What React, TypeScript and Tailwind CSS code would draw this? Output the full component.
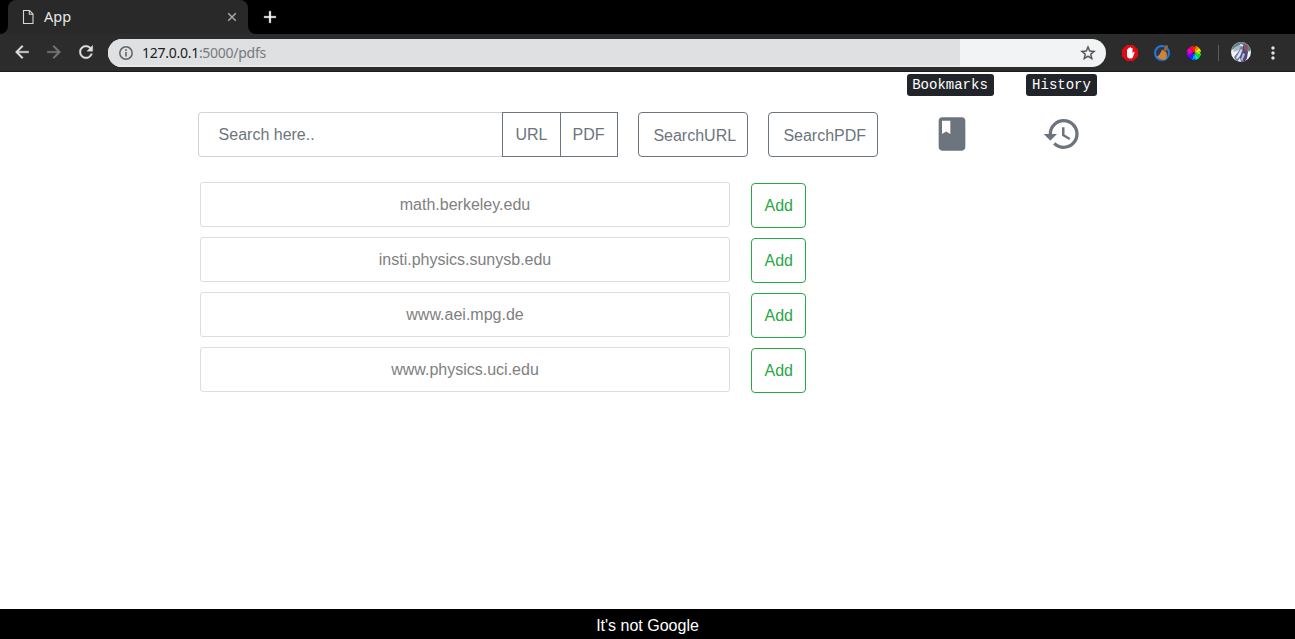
import React from "react";
import { MdBook, MdHistory, MdMoreVert } from "react-icons/md";

const sites = ["math.berkeley.edu", "insti.physics.sunysb.edu", "www.aei.mpg.de", "www.physics.uci.edu"];

const wheel = ["#ff8a00", "#ffe600", "#7dff00", "#00e03c", "#00e5c8", "#00a2ff", "#1b2cff", "#7a00ff", "#d400ff", "#ff00b4", "#ff0046", "#ff2a00"];

const glyphs = {
  back: "M20 11H7.83l5.59-5.59L12 4l-8 8 8 8 1.41-1.41L7.83 13H20v-2z",
  forward: "M12 4l-1.41 1.41L16.17 11H4v2h12.17l-5.58 5.59L12 20l8-8z",
  refresh: "M17.65 6.35A7.958 7.958 0 0 0 12 4c-4.42 0-7.99 3.58-7.99 8s3.57 8 7.99 8c3.73 0 6.84-2.55 7.73-6h-2.08A5.99 5.99 0 0 1 12 18c-3.31 0-6-2.69-6-6s2.69-6 6-6c1.66 0 3.14.69 4.22 1.78L13 11h7V4l-2.35 2.35z",
  plus: "M19 13h-6v6h-2v-6H5v-2h6V5h2v6h6v2z",
  star: "M22 9.24l-7.19-.62L12 2 9.19 8.63 2 9.24l5.46 4.73L5.82 21 12 17.27 18.18 21l-1.63-7.03L22 9.24zM12 15.4l-3.76 2.27 1-4.28-3.32-2.88 4.38-.38L12 6.1l1.71 4.04 4.38.38-3.32 2.88 1 4.28L12 15.4z",
};

function Glyph({ name, className }: { name: keyof typeof glyphs; className: string }) {
  return (
    <svg viewBox="0 0 24 24" fill="currentColor" stroke="currentColor" strokeWidth="0.4" className={className}>
      <path d={glyphs[name]} />
    </svg>
  );
}

function TabStrip() {
  return (
    <div className="flex h-[34px] items-end bg-black">
      <svg width="8" height="8" viewBox="0 0 8 8" className="shrink-0">
        <path d="M8 0v8H0a8 8 0 0 0 8-8z" fill="#292929" />
      </svg>
      <div className="flex h-[34px] w-60 items-center rounded-t-lg bg-[#292929] pl-[14px] pr-[11px]">
        <svg width="12" height="16" viewBox="0 0 12 16" fill="none" stroke="#d6d6d6" strokeWidth="1.1">
          <path d="M1.5 1.5h6l3.5 3.5v9.5H1.5zM7.3 1.5V5.2H11" />
        </svg>
        <span className="-mt-0.5 ml-[10px] text-[14.5px] leading-5 text-[#e8e8e8]">App</span>
        <svg width="10" height="10" viewBox="0 0 10 10" fill="none" stroke="#a8a8a8" strokeWidth="1.5" className="ml-auto">
          <path d="m1.2 1.2 7.6 7.6M8.8 1.2 1.2 8.8" />
        </svg>
      </div>
      <svg width="8" height="8" viewBox="0 0 8 8" className="shrink-0">
        <path d="M0 0v8h8a8 8 0 0 1-8-8z" fill="#292929" />
      </svg>
      <div className="flex h-[34px] items-center pl-1">
        <Glyph name="plus" className="size-5 text-white" />
      </div>
    </div>
  );
}

function Extensions() {
  return (
    <div className="flex items-center">
      <svg width="16" height="16" viewBox="0 0 16 16" className="ml-4">
        <path d="M4.8 0h6.4L16 4.8v6.4L11.2 16H4.8L0 11.2V4.8z" fill="#e30b13" />
        <path d="M5 9V4.6q.7-.9 1.3 0V3.1q.7-.9 1.4 0v-.6q.7-.9 1.4 0v.8q.7-.8 1.4 0v5.2l1-1.6q.9-.5 1.1.3L11 12q-.7 1.5-2.7 1.5Q5 13.5 5 10z" fill="#fff" />
      </svg>
      <svg width="16" height="16" viewBox="0 0 16 16" className="ml-4">
        <circle cx="8" cy="8" r="7" fill="#303640" stroke="#1f78dc" strokeWidth="2" />
        <path d="M12.3 0 9.5 4.8 12 6.4 14.2 1z" fill="#a9652b" />
        <path d="M8.2 4.6 12.5 7.5c.6 2 .3 5-.8 7.2C8.5 15 4.5 13.9 3 11.5c2.4-.8 3.6-3.6 5.2-6.9z" fill="#cf8437" />
      </svg>
      <svg width="16" height="16" viewBox="0 0 16 16" className="ml-4">
        <circle cx="8" cy="8.7" r="7.2" fill="#181818" />
        {wheel.map((color, i) => (
          <path key={color} d="M8 8V.8a7.2 7.2 0 0 1 3.75 1.05z" fill={color} transform={`rotate(${i * 30 + 15} 8 8)`} />
        ))}
        <path d="M7.3.3h1.4v1.7H7.3zM7.3 14h1.4v1.7H7.3zM.3 7.3h1.7v1.4H.3zM14 7.3h1.7v1.4H14z" fill="#333" />
        <circle cx="8" cy="8" r="0.9" fill="#222" />
      </svg>
      <div className="ml-4 h-4 w-px bg-[#5d5d5d]" />
      <svg width="20" height="20" viewBox="0 0 20 20" className="-mt-0.5 ml-3 rounded-full">
        <rect width="20" height="20" fill="#f1f3f6" />
        <path d="M2 0h15l3 7-2 3-4-6-4-2-4 3-5 3z" fill="#66808a" />
        <path d="m4 5 5-2 2 2-5 4-4 1z" fill="#a5bac2" />
        <path d="M10 4 7 10l-4 5 3 5 6-8 2-7z" fill="#6f7cab" />
        <path d="m12 3 4 2 1 5-1 6-2 4h-4l-1-5 3-6z" fill="#51457a" />
        <path d="m13 2 3 1 1 4-2 3-2-3z" fill="#8d5359" />
        <path d="m10 7 1 1-2 6-3 3-1-1z" fill="#dfe5f4" />
        <path d="m12 11 2 1-2 5-1 3-1-3z" fill="#b9bbdf" />
      </svg>
      <MdMoreVert className="ml-3 size-5 text-[#e0e0e0]" />
    </div>
  );
}

function Toolbar() {
  return (
    <div className="flex h-[38px] items-center border-b border-[#1b1b1b] bg-[#2c2c2c] pl-3">
      <div className="-mt-0.5 flex gap-3 text-[#e0e0e0]">
        <Glyph name="back" className="size-5" />
        <Glyph name="forward" className="size-5 text-[#777]" />
        <Glyph name="refresh" className="size-5" />
      </div>
      <div className="ml-3 flex h-7 w-[998px] items-center overflow-hidden rounded-full bg-[#f1f3f4]">
        <div className="flex h-full w-[852px] items-center border-b-2 border-[#e7e9ea] bg-[#dfe0e2] pl-[10px]">
          <svg width="16" height="16" viewBox="0 0 16 16" className="mt-0.5">
            <circle cx="8" cy="8" r="6.2" fill="none" stroke="#5f6368" strokeWidth="1.5" />
            <path d="M7.2 4.3h1.6v1.6H7.2zM7.2 7h1.6v4.6H7.2z" fill="#5f6368" />
          </svg>
          <span className="ml-2 mt-[3px] text-[14px] leading-5 tracking-[-0.27px] text-[#202124]">
            127.0.0.1<span className="text-[#777a7e]">:5000/pdfs</span>
          </span>
        </div>
        <Glyph name="star" className="ml-auto mr-[9px] size-[18px] text-[#4d5156]" />
      </div>
      <Extensions />
    </div>
  );
}

function SearchBar() {
  return (
    <div className="flex h-[85px] items-start pl-[198px]">
      <div className="mt-10 flex h-[45px] text-[#6c757d]">
        <input
          placeholder="Search here.."
          className="w-[305px] rounded-l border border-r-0 border-[#ced4da] pl-[19.6px] outline-none placeholder:text-[#6c757d]"
        />
        <button className="-ml-px w-[59px] border border-[#6c757d]">URL</button>
        <button className="-ml-px w-[58px] border border-[#6c757d] pr-px">PDF</button>
        <button className="ml-5 w-[110px] rounded border border-[#6c757d] pl-[3.5px] pt-0.5">SearchURL</button>
        <button className="ml-5 w-[110px] rounded border border-[#6c757d] pl-[3.5px] pt-0.5">SearchPDF</button>
      </div>
      <div className="ml-[29px] mt-0.5 flex w-[87px] flex-col items-center">
        <kbd className="h-[22px] w-full rounded-[3px] bg-[#212529] pr-px text-center font-['Liberation_Mono',monospace] text-[14px] leading-[23px] text-white">Bookmarks</kbd>
        <MdBook className="ml-[3px] mt-[18px] size-10 text-[#6c757d]" />
      </div>
      <div className="ml-8 mt-0.5 flex w-[71px] flex-col items-center">
        <kbd className="h-[22px] w-full rounded-[3px] bg-[#212529] text-center font-['Liberation_Mono',monospace] text-[14px] leading-[23px] text-white">History</kbd>
        <MdHistory className="ml-px mt-[18px] size-10 text-[#6c757d]" />
      </div>
    </div>
  );
}

export default function App() {
  return (
    <div className="flex h-[639px] w-[1295px] flex-col overflow-hidden bg-white font-['Liberation_Sans',sans-serif] text-base leading-6">
      <header className="font-['Noto_Sans',sans-serif]">
        <TabStrip />
        <Toolbar />
      </header>
      <main className="flex-1">
        <SearchBar />
        <ul className="mt-[25px] flex flex-col gap-[9px] pl-[200px]">
          {sites.map((site) => (
            <li key={site} className="flex h-[46px] items-start">
              <div className="flex h-[45px] w-[530px] items-center justify-center rounded-[3px] border border-[#dcdddf] text-[#808080]">{site}</div>
              <button className="ml-[21px] mt-px h-[45px] w-[55px] rounded border border-[#28a745] pl-[0.5px] text-[#28a745]">Add</button>
            </li>
          ))}
        </ul>
      </main>
      <footer className="flex h-[30px] items-center justify-center bg-black pt-1 text-white">It's not Google</footer>
    </div>
  );
}
